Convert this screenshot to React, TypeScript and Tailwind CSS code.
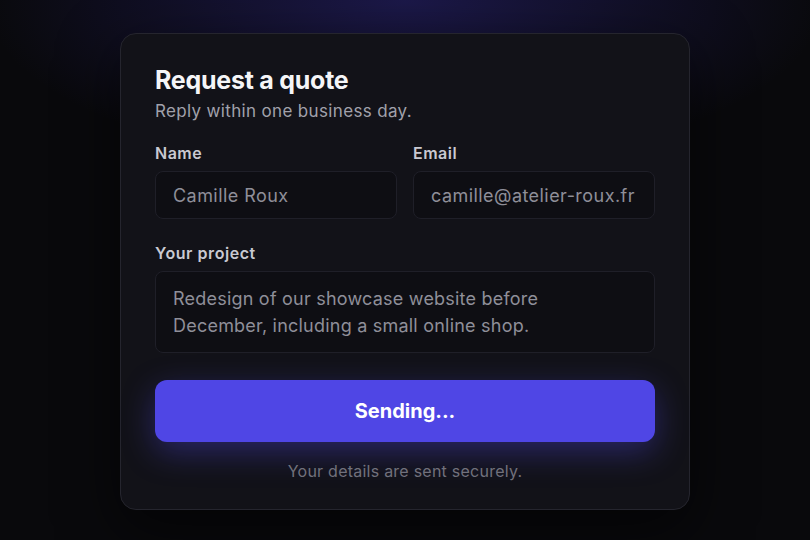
export default function App() {
  return (
    <div
      className="flex h-[540px] w-full justify-center overflow-hidden bg-[#09090c] pt-[33px] bg-[radial-gradient(ellipse_420px_170px_at_50%_0%,rgba(67,56,202,0.32),transparent)]"
      style={{ fontFamily: "Inter, 'Noto Sans', sans-serif" }}
    >
      <div className="h-[477px] w-[570px] rounded-2xl border border-[#25252e] bg-[#121218] px-[34px] pt-[30px] shadow-[0_20px_60px_rgba(0,0,0,0.6)]">
        <h1 className="text-[25px] leading-8 font-bold tracking-[-0.01em] text-[#f5f5f7]">Request a quote</h1>
        <p className="mt-[3px] text-[17px] leading-6 tracking-[0.02em] text-[#a1a1ab]">Reply within one business day.</p>

        <div className="mt-5 grid grid-cols-2 gap-4">
          <Field label="Name" value="Camille Roux" />
          <Field label="Email" value="camille@atelier-roux.fr" />
        </div>

        <div className="mt-6">
          <label className="block text-[16px] leading-5 font-semibold tracking-[0.035em] text-[#c9c9d1]">Your project</label>
          <div className="mt-2 rounded-lg border border-[#1f1f28] bg-[#0e0e13] px-[17px] py-[13px] text-[18px] leading-[27px] tracking-[0.012em] text-[#8f8f99]">
            Redesign of our showcase website before
            <br />
            December, including a small online shop.
          </div>
        </div>

        <button
          type="button"
          className="mt-[27px] flex h-[62px] w-full items-center justify-center rounded-xl bg-[#4f46e5] text-[20px] font-bold text-white shadow-[0_10px_32px_rgba(79,70,229,0.38)]"
        >
          Sending...
        </button>

        <p className="mt-[19px] text-center text-[16px] leading-5 tracking-[0.015em] text-[#71717c]">Your details are sent securely.</p>
      </div>
    </div>
  );
}

function Field({ label, value }: { label: string; value: string }) {
  return (
    <div>
      <label className="block text-[16px] leading-5 font-semibold tracking-[0.03em] text-[#c9c9d1]">{label}</label>
      <div className="mt-2 flex h-12 items-center rounded-lg border border-[#1f1f28] bg-[#0e0e13] px-[17px] text-[18px] tracking-[0.025em] text-[#8f8f99]">
        {value}
      </div>
    </div>
  );
}
